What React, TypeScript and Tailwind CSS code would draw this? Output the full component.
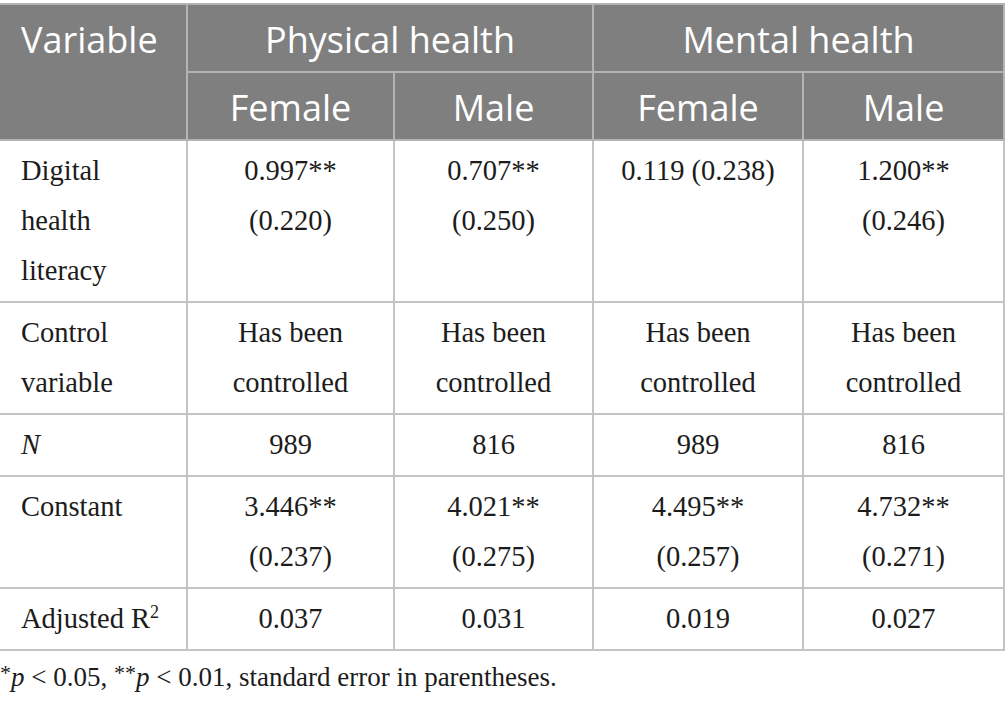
const serif = "font-['Liberation_Serif',_'Times_New_Roman',_serif]";

interface Row {
    label: React.ReactNode;
    cells: React.ReactNode[];
}

const rows: Row[] = [
    {
        label: (
            <>
                Digital
                <br />
                health
                <br />
                literacy
            </>
        ),
        cells: [
            <>0.997**<br />(0.220)</>,
            <>0.707**<br />(0.250)</>,
            <>0.119 (0.238)</>,
            <>1.200**<br />(0.246)</>,
        ],
    },
    {
        label: (
            <>
                Control
                <br />
                variable
            </>
        ),
        cells: Array.from({ length: 4 }).map((_, i) => (
            <span key={i}>
                Has been
                <br />
                controlled
            </span>
        )),
    },
    {
        label: <i>N</i>,
        cells: ["989", "816", "989", "816"],
    },
    {
        label: "Constant",
        cells: [
            <>3.446**<br />(0.237)</>,
            <>4.021**<br />(0.275)</>,
            <>4.495**<br />(0.257)</>,
            <>4.732**<br />(0.271)</>,
        ],
    },
    {
        label: (
            <>
                Adjusted R<span className="text-[18px] align-[10px] leading-none">2</span>
            </>
        ),
        cells: ["0.037", "0.031", "0.019", "0.027"],
    },
];

export default function App() {
    return (
        <div className="w-[1005px] h-[703px] bg-white overflow-hidden">
            <table className="mt-[3px] w-[1004px] border-collapse table-fixed">
                <colgroup>
                    <col className="w-[187px]" />
                    <col className="w-[207px]" />
                    <col className="w-[199px]" />
                    <col className="w-[210px]" />
                    <col className="w-[201px]" />
                </colgroup>
                <thead className="bg-[#7f7f7f] text-white font-['Open_Sans',_sans-serif] text-[36px] leading-[48px] font-normal">
                    <tr className="h-[68px]">
                        <th rowSpan={2} className="border-2 border-[#b4b4b4] border-l-0 text-left align-top pl-[21px] font-normal">
                            <div className="h-[66px] flex items-center pt-[4px]">Variable</div>
                        </th>
                        <th colSpan={2} className="border-2 border-[#b4b4b4] font-normal pt-[4px]">
                            Physical health
                        </th>
                        <th colSpan={2} className="border-2 border-[#b4b4b4] font-normal pt-[4px]">
                            Mental health
                        </th>
                    </tr>
                    <tr className="h-[68px]">
                        {["Female", "Male", "Female", "Male"].map((g, i) => (
                            <th key={i} className="border-2 border-[#b4b4b4] font-normal pt-[4px]">
                                {g}
                            </th>
                        ))}
                    </tr>
                </thead>
                <tbody className={`${serif} text-[28.5px] leading-[50px] text-[#1c1c1c]`}>
                    {rows.map((row, ri) => (
                        <tr key={ri}>
                            <td className="border-2 border-[#c4c4c4] border-l-0 align-top pl-[21px] py-[5px]">
                                {row.label}
                            </td>
                            {row.cells.map((c, ci) => (
                                <td key={ci} className="border-2 border-[#c4c4c4] align-top text-center py-[5px]">
                                    {c}
                                </td>
                            ))}
                        </tr>
                    ))}
                </tbody>
            </table>
            <p className={`${serif} text-[27px] text-[#1c1c1c] mt-[9px] leading-[34px]`}>
                <span className="text-[22px] align-[6px] leading-none">*</span>
                <i>p</i> &lt; 0.05, <span className="text-[22px] align-[6px] leading-none">**</span>
                <i>p</i> &lt; 0.01, standard error in parentheses.
            </p>
        </div>
    );
}
